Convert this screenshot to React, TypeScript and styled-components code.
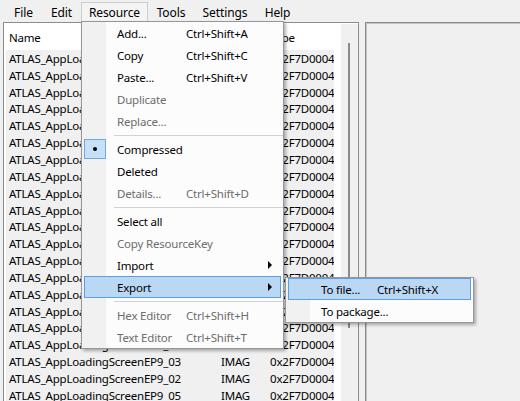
import React from 'react'
import styled, {createGlobalStyle} from 'styled-components'

const GlobalStyle = createGlobalStyle`
  html, body {
    margin: 0;
    padding: 0;
  }
  body {
    background: #f0f0f0;
    font-family: 'Noto Sans', 'Open Sans', sans-serif;
    font-size: 11.5px;
    letter-spacing: -0.2px;
    color: #000;
  }
`

type MenuEntry =
  | {kind: 'item'; label: string; shortcut?: string; disabled?: boolean; checked?: boolean; submenu?: boolean; active?: boolean}
  | {kind: 'sep'}

const barItems = [
  {label: 'File', width: 37},
  {label: 'Edit', width: 39},
  {label: 'Resource', width: 67, open: true},
  {label: 'Tools', width: 46},
  {label: 'Settings', width: 62},
  {label: 'Help', width: 43},
]

const resourceMenu: MenuEntry[] = [
  {kind: 'item', label: 'Add...', shortcut: 'Ctrl+Shift+A'},
  {kind: 'item', label: 'Copy', shortcut: 'Ctrl+Shift+C'},
  {kind: 'item', label: 'Paste...', shortcut: 'Ctrl+Shift+V'},
  {kind: 'item', label: 'Duplicate', disabled: true},
  {kind: 'item', label: 'Replace...', disabled: true},
  {kind: 'sep'},
  {kind: 'item', label: 'Compressed', checked: true},
  {kind: 'item', label: 'Deleted'},
  {kind: 'item', label: 'Details...', shortcut: 'Ctrl+Shift+D', disabled: true},
  {kind: 'sep'},
  {kind: 'item', label: 'Select all'},
  {kind: 'item', label: 'Copy ResourceKey', disabled: true},
  {kind: 'item', label: 'Import', submenu: true},
  {kind: 'item', label: 'Export', submenu: true, active: true},
  {kind: 'sep'},
  {kind: 'item', label: 'Hex Editor', shortcut: 'Ctrl+Shift+H', disabled: true},
  {kind: 'item', label: 'Text Editor', shortcut: 'Ctrl+Shift+T', disabled: true},
]

const exportMenu: MenuEntry[] = [
  {kind: 'item', label: 'To file...', shortcut: 'Ctrl+Shift+X', active: true},
  {kind: 'item', label: 'To package...'},
]

const rowNames = [
  'ATLAS_AppLoadingScreenEP1_01',
  'ATLAS_AppLoadingScreenEP1_02',
  'ATLAS_AppLoadingScreenEP2_01',
  'ATLAS_AppLoadingScreenEP2_02',
  'ATLAS_AppLoadingScreenEP3_01',
  'ATLAS_AppLoadingScreenEP3_02',
  'ATLAS_AppLoadingScreenEP4_01',
  'ATLAS_AppLoadingScreenEP4_02',
  'ATLAS_AppLoadingScreenEP5_01',
  'ATLAS_AppLoadingScreenEP5_02',
  'ATLAS_AppLoadingScreenEP6_01',
  'ATLAS_AppLoadingScreenEP6_02',
  'ATLAS_AppLoadingScreenEP7_01',
  'ATLAS_AppLoadingScreenEP7_02',
  'ATLAS_AppLoadingScreenEP8_01',
  'ATLAS_AppLoadingScreenEP8_02',
  'ATLAS_AppLoadingScreenEP9_01',
  'ATLAS_AppLoadingScreenEP9_06',
  'ATLAS_AppLoadingScreenEP9_03',
  'ATLAS_AppLoadingScreenEP9_02',
  'ATLAS_AppLoadingScreenEP9_05',
  'ATLAS_AppLoadingScreenEP9_04',
]

const Window = styled.div`
  position: relative;
  height: 100vh;
  overflow: hidden;
  background: #f0f0f0;
`

const MenuBar = styled.div`
  display: flex;
  height: 22px;
  padding-left: 5px;
  font-size: 12px;
  letter-spacing: -0.1px;
`

const BarItem = styled.div<{$width: number; $open?: boolean}>`
  box-sizing: border-box;
  width: ${p => p.$width}px;
  height: 20px;
  margin-top: 2px;
  display: flex;
  align-items: center;
  justify-content: center;
  border: 1px solid ${p => (p.$open ? '#cccccc' : 'transparent')};
  border-bottom: none;
  background: ${p => (p.$open ? '#f4f4f4' : 'transparent')};
`

const Workspace = styled.div`
  display: flex;
  gap: 6px;
  padding-left: 3px;
  height: 440px;
`

const ListPanel = styled.div`
  box-sizing: border-box;
  width: 356px;
  display: flex;
  padding: 1px 0 0 2px;
  background: #fff;
  border: 1px solid #8c8c8c;
`

const Table = styled.div`
  flex: 1;
  display: flex;
  flex-direction: column;
`

const Row = styled.div<{$header?: boolean}>`
  display: grid;
  grid-template-columns: 210px 50px 68px;
  height: ${p => (p.$header ? '26px' : '16.85px')};
  align-items: center;
  background: ${p => (p.$header ? '#fff' : '#f0f0f0')};
  width: 328px;
  white-space: nowrap;
`

const Cell = styled.div<{$pad: number}>`
  padding-left: ${p => p.$pad}px;
  overflow: hidden;
`

const ScrollBar = styled.div`
  width: 17px;
  background: #f0f0f0;
  padding-top: 19px;
`

const Thumb = styled.div`
  width: 2px;
  height: 285px;
  margin-left: 7px;
  background: #8a8a8a;
`

const SidePanel = styled.div`
  flex: 1;
  margin-right: -4px;
  border: 1px solid #8c8c8c;
  box-shadow: inset 1px 1px 0 #c4c4c4;
  background: #f0f0f0;
`

const Dropdown = styled.div<{$left: number; $top: number; $width: number}>`
  position: absolute;
  left: ${p => p.$left}px;
  top: ${p => p.$top}px;
  width: ${p => p.$width}px;
  box-sizing: border-box;
  border: 1px solid #979797;
  background: linear-gradient(to right, #f1f1f1 0 24px, #fcfcfc 24px);
  box-shadow: 2px 2px 3px rgba(0, 0, 0, 0.3);
`

const Item = styled.div<{$disabled?: boolean; $active?: boolean; $cols: string}>`
  box-sizing: border-box;
  height: 22px;
  margin: 0 2px;
  display: grid;
  grid-template-columns: ${p => p.$cols};
  align-items: center;
  white-space: nowrap;
  border: 1px solid ${p => (p.$active ? '#5a9fe4' : 'transparent')};
  background: ${p => (p.$active ? '#bad7f3' : 'transparent')};
  color: ${p => (p.$disabled ? '#6d6d6d' : '#000')};
`

const CheckCell = styled.div`
  display: flex;
  align-items: center;
  height: 20px;
  margin-left: -1px;
`

const ArrowCell = styled.div`
  display: flex;
  align-items: center;
`

const Arrow = styled.div`
  width: 0;
  height: 0;
  border-left: 4px solid #000;
  border-top: 4px solid transparent;
  border-bottom: 4px solid transparent;
`

const Separator = styled.div`
  height: 1px;
  margin: 3px 0 2px 32px;
  background: #d2d2d2;
`

const CheckedIcon = () => (
  <svg width="22" height="20" viewBox="0 0 22 20">
    <rect x="0.5" y="0.5" width="21" height="19" fill="#c8e0f6" stroke="#6fa9e4" />
    <circle cx="11" cy="10" r="2" fill="#000" />
  </svg>
)

const Menu: React.FC<{entries: MenuEntry[]; left: number; top: number; width: number; cols: string}> = ({
  entries,
  left,
  top,
  width,
  cols,
}) => (
  <Dropdown $left={left} $top={top} $width={width}>
    {entries.map((e, i) =>
      e.kind === 'sep' ? (
        <Separator key={i} />
      ) : (
        <Item key={i} $cols={cols} $disabled={e.disabled} $active={e.active}>
          <CheckCell>{e.checked && <CheckedIcon />}</CheckCell>
          <span>{e.label}</span>
          <span>{e.shortcut}</span>
          <ArrowCell>{e.submenu && <Arrow />}</ArrowCell>
        </Item>
      ),
    )}
  </Dropdown>
)

const App: React.FC = () => {
  return (
    <Window>
      <GlobalStyle />
      <MenuBar>
        {barItems.map(b => (
          <BarItem key={b.label} $width={b.width} $open={b.open}>
            {b.label}
          </BarItem>
        ))}
      </MenuBar>
      <Workspace>
        <ListPanel>
          <Table>
            <Row $header>
              <Cell $pad={3}>Name</Cell>
              <Cell $pad={5}>Tag</Cell>
              <Cell $pad={4}>Type</Cell>
            </Row>
            {rowNames.map(name => (
              <Row key={name}>
                <Cell $pad={3}>{name}</Cell>
                <Cell $pad={5}>IMAG</Cell>
                <Cell $pad={4}>0x2F7D0004</Cell>
              </Row>
            ))}
          </Table>
          <ScrollBar>
            <Thumb />
          </ScrollBar>
        </ListPanel>
        <SidePanel />
      </Workspace>
      <Menu entries={resourceMenu} left={81} top={21} width={203} cols="32px 69px 1fr 12px" />
      <Menu entries={exportMenu} left={285} top={277} width={189} cols="32px 56px 1fr" />
    </Window>
  )
}

export default App
